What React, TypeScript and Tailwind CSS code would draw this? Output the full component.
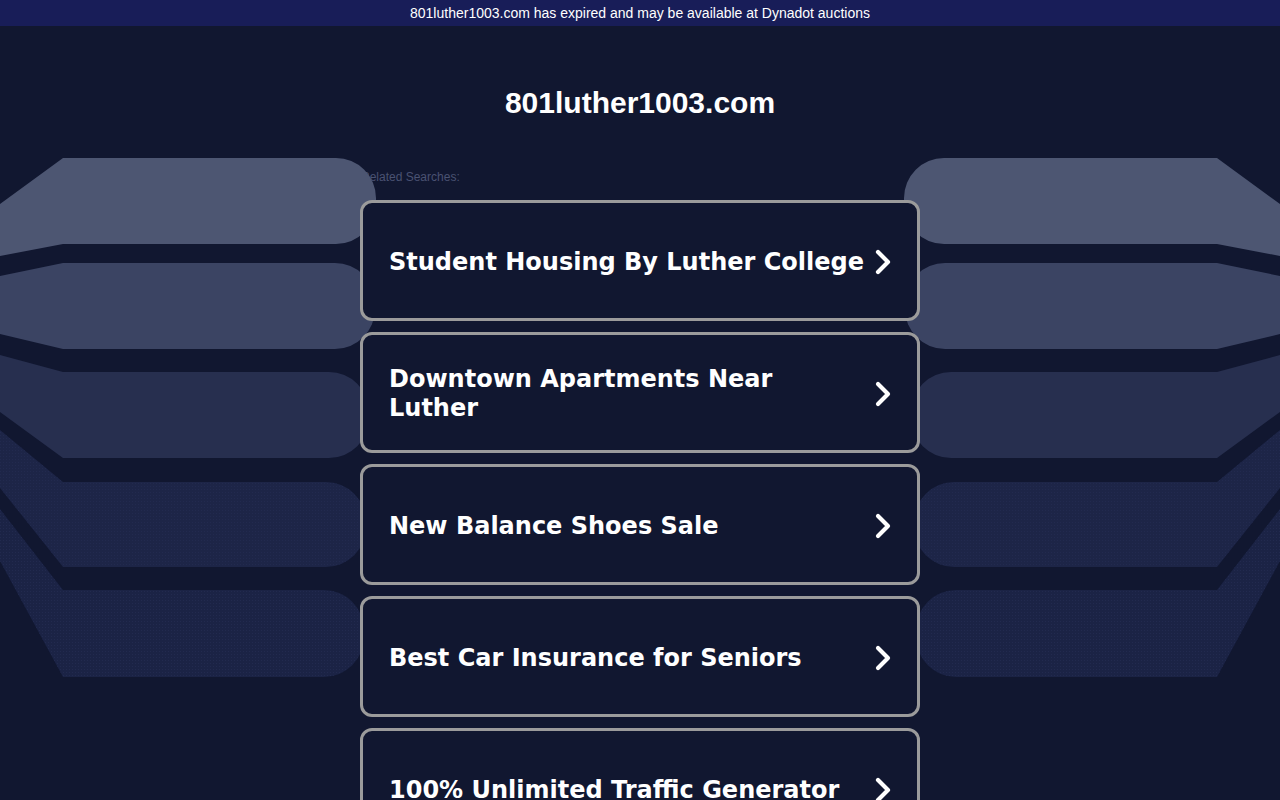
import React from "react";

type Band = { lt: number; rt: number; rb: number; lb: number; r: number; color: string; dots?: boolean };

const bands: Band[] = [
  { lt: 204, rt: 158, rb: 244, lb: 256, r: 376, color: "#4d5672" },
  { lt: 276, rt: 263, rb: 349, lb: 334, r: 375, color: "#3b4463" },
  { lt: 355, rt: 372, rb: 458, lb: 412, r: 369, color: "#272f4f" },
  { lt: 430, rt: 482, rb: 567, lb: 488, r: 366, color: "#1d2547", dots: true },
  { lt: 509, rt: 590, rb: 677, lb: 561, r: 364, color: "#1b2345", dots: true },
];

function bandPath(b: Band) {
  const rad = 40;
  return `M0 ${b.lt} L63 ${b.rt} L${b.r - rad} ${b.rt} A${rad} ${rad} 0 0 1 ${b.r} ${b.rt + rad} L${b.r} ${b.rb - rad} A${rad} ${rad} 0 0 1 ${b.r - rad} ${b.rb} L63 ${b.rb} L0 ${b.lb} Z`;
}

function Bands({ id }: { id: string }) {
  return (
    <svg width="380" height="800" viewBox="0 0 380 800" xmlns="http://www.w3.org/2000/svg">
      <defs>
        <pattern id={`dots-${id}`} width="3" height="3" patternUnits="userSpaceOnUse">
          <rect x="0" y="0" width="1" height="1" fill="#262e55" />
        </pattern>
      </defs>
      {bands.map((b, i) => (
        <g key={i}>
          <path d={bandPath(b)} fill={b.color} />
          {b.dots && <path d={bandPath(b)} fill={`url(#dots-${id})`} opacity="0.6" />}
        </g>
      ))}
    </svg>
  );
}

function Chevron() {
  return (
    <svg width="18" height="26" viewBox="0 0 18 26" className="shrink-0 ml-[9px]" xmlns="http://www.w3.org/2000/svg">
      <path d="M4 3 L14 13 L4 23" fill="none" stroke="#ffffff" strokeWidth="4.2" strokeLinecap="round" strokeLinejoin="round" />
    </svg>
  );
}

const items = [
  "Student Housing By Luther College",
  "Downtown Apartments Near Luther",
  "New Balance Shoes Sale",
  "Best Car Insurance for Seniors",
  "100% Unlimited Traffic Generator",
];

export default function App() {
  return (
    <div className="relative h-screen w-full overflow-hidden bg-[#111730] font-['Liberation_Sans',Arial,sans-serif]">
      <div className="h-[26px] w-full bg-[#181d58] flex items-center justify-center text-white text-[14px] leading-none">
        801luther1003.com has expired and may be available at Dynadot auctions
      </div>
      <div className="flex flex-col items-center">
        <h1 className="mt-[60px] text-white font-bold text-[30px] leading-[34px]">801luther1003.com</h1>
        <div className="w-[560px] mt-[50px]">
          <div className="text-[12px] leading-[14px] text-[#4a5272] pl-[1px]">Related Searches:</div>
          <div className="relative z-10 mt-[16px] flex flex-col gap-[11px]">
            {items.map((t) => (
              <div
                key={t}
                className="h-[121px] rounded-[12px] border-[3px] border-[#9b9b9b] bg-[#111730] flex items-center pl-[26px] pr-[25px] pt-[3px]"
              >
                <div className="flex-1 text-white font-bold text-[24px] leading-[29px] font-['DejaVu_Sans',Verdana,sans-serif]">
                  {t}
                </div>
                <Chevron />
              </div>
            ))}
          </div>
        </div>
      </div>
      <div className="absolute left-0 top-0 pointer-events-none">
        <Bands id="l" />
      </div>
      <div className="absolute right-0 top-0 pointer-events-none -scale-x-100">
        <Bands id="r" />
      </div>
    </div>
  );
}
